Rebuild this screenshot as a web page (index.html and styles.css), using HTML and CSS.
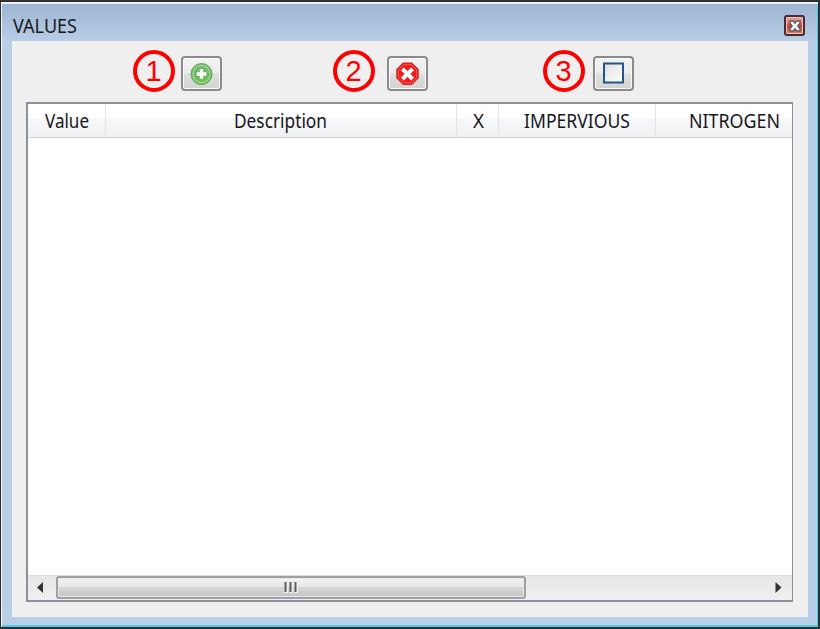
FILE: index.html
```html
<!DOCTYPE html>
<html lang="en">
<head>
<meta charset="utf-8">
<title>VALUES</title>
<link rel="stylesheet" href="styles.css">
</head>
<body>
<div class="window">
  <header class="titlebar">
    <svg class="label" width="70" height="26"><text x="0" y="20" textLength="64" lengthAdjust="spacingAndGlyphs">VALUES</text></svg>
    <button class="close" aria-label="Close">
      <svg width="16" height="16" viewBox="0 0 16 16"><path d="M3 3.2h3.6L8 5.3l1.4-2.1H13v2L10.7 8l2.3 2.8v2H9.4L8 10.7l-1.4 2.1H3v-2L5.3 8 3 5.2z" fill="#fff" stroke="#51505c" stroke-width="1.2"/></svg>
    </button>
  </header>
  <main class="panel">
    <div class="toolbar">
      <div class="tool"><span class="number">1</span>
        <button aria-label="Add"><svg width="24" height="24" viewBox="0 0 24 24"><defs><linearGradient id="green" x2="0" y2="1"><stop stop-color="#75b478"/><stop offset="1" stop-color="#65c04c"/></linearGradient></defs><circle cx="11.5" cy="12" r="10.5" fill="url(#green)" stroke="#5ca555"/><circle cx="11.5" cy="12" r="8.6" fill="none" stroke="#a9d8a0" stroke-width="1.2"/><path d="M11.5 7.2v9.6M6.7 12h9.6" stroke="#fff" stroke-width="3.4"/></svg></button></div>
      <div class="tool"><span class="number">2</span>
        <button aria-label="Delete"><svg width="24" height="24" viewBox="0 0 24 24"><path d="M7 1h9l6.2 6.2v9L16 22.5H7l-6.2-6.3v-9z" fill="#f01c1c" stroke="#d42525"/><path d="M7.5 2.6h8l5.1 5.1v8l-5.1 5.2h-8l-5.1-5.2v-8z" fill="none" stroke="#ff6760" stroke-width=".8"/><path d="M6.4 6.8l10.2 10.2m0-10.2L6.4 17" stroke="#fff" stroke-width="4"/></svg></button></div>
      <div class="tool"><span class="number">3</span>
        <button aria-label="Clear"><svg width="24" height="24" viewBox="0 0 24 24"><defs><linearGradient id="paper" x2="1" y2="1"><stop stop-color="#deded9"/><stop offset="1" stop-color="#fff"/></linearGradient></defs><rect x="2" y="1.5" width="19" height="19" fill="url(#paper)" stroke="#245583" stroke-width="2"/></svg></button></div>
    </div>
    <section class="table">
      <div class="headings">
        <div class="cell"><svg class="label" width="44" height="26"><text x="0" y="20" textLength="44" lengthAdjust="spacingAndGlyphs">Value</text></svg></div>
        <div class="cell"><svg class="label" width="93" height="26"><text x="-1" y="20" textLength="93" lengthAdjust="spacingAndGlyphs">Description</text></svg></div>
        <div class="cell"><svg class="label" width="11" height="26"><text x="1" y="20" textLength="11" lengthAdjust="spacingAndGlyphs">X</text></svg></div>
        <div class="cell"><svg class="label" width="106" height="26"><text x="0" y="20" textLength="106" lengthAdjust="spacingAndGlyphs">IMPERVIOUS</text></svg></div>
        <div class="cell last"><svg class="label" width="91" height="26"><text x="0" y="20" textLength="91" lengthAdjust="spacingAndGlyphs">NITROGEN</text></svg></div>
      </div>
      <div class="rows"></div>
      <div class="scrollbar">
        <svg class="arrow" width="28" height="24"><path d="M9 11.5l6-5.5v11z" fill="#333"/></svg>
        <div class="thumb"><svg width="14" height="13"><path d="M0 1h4v11H0zM5 1h4v11H5zM10 1h4v11h-4z" fill="#eee"/><path d="M1.5 1v10M6.5 1v10M11.5 1v10" stroke="#5b5b5b" stroke-width="2"/></svg></div>
        <svg class="arrow" width="28" height="24"><path d="M11.5 6l6 5.5-6 5.5z" fill="#333"/></svg>
      </div>
    </section>
  </main>
</div>
</body>
</html>
```
FILE: styles.css
```css
* { box-sizing: border-box; }
body { margin: 0; overflow: hidden; font-family: "Noto Sans", sans-serif; }
button { padding: 0; font: inherit; }
svg { display: block; flex: none; }
.window {
  display: flex;
  flex-direction: column;
  width: 820px;
  height: 629px;
  padding: 2px 10px 10px 11px;
  border: 2px solid #302f30;
  border-left-width: 1px;
  background: linear-gradient(#9bb4d0, #b9cee7 40px);
  box-shadow: inset 1px 2px #eef2f6, inset -1px -2px #48cdea;
}
.titlebar {
  display: flex;
  justify-content: space-between;
  flex: 0 0 37px;
  padding: 9px 3px 0 1px;
}
.label { overflow: visible; font-size: 19px; fill: #17171b; }
.close {
  display: flex;
  align-items: center;
  justify-content: center;
  width: 21px;
  height: 21px;
  margin-top: 2px;
  border: 2px solid #512735;
  border-radius: 3px;
  background: linear-gradient(#e8aba0, #c97362 40%, #bd422c 48%, #d98375);
  box-shadow: inset 0 0 0 1px #efc0b9;
}
.panel { flex: 1; padding: 11px 14px 14px; background: #efefef; }
.toolbar { display: flex; gap: 110px; height: 50px; padding-left: 107px; }
.tool { display: flex; gap: 6px; width: 90px; }
.tool:nth-child(2) { gap: 12px; width: 100px; }
.tool:nth-child(3) { gap: 8px; }
.number {
  display: flex;
  align-items: center;
  justify-content: center;
  flex: none;
  width: 42px;
  height: 42px;
  margin-top: -2px;
  padding-right: 1px;
  border: 4px solid #f00;
  border-radius: 50%;
  color: #f00;
  font: 29px/1 "Liberation Sans", sans-serif;
}
.tool button {
  display: flex;
  align-items: center;
  justify-content: center;
  flex: none;
  width: 41px;
  height: 35px;
  margin-top: 4px;
  border: 2px solid #8b8b8b;
  border-radius: 4px;
  background: linear-gradient(#f3f3f3, #ebebeb 49%, #dfdfdf 52%, #d3d3d3);
  box-shadow: inset 0 0 0 1px #fafafa;
}
.table {
  display: flex;
  flex-direction: column;
  width: 767px;
  height: 500px;
  border: 2px solid #8b9099;
  border-right-width: 1px;
  background: #fff;
}
.headings {
  display: grid;
  grid-template-columns: 78px 351px 42px 157px 1fr;
  flex: 0 0 34px;
  border-bottom: 1px solid #d0d1d4;
  background: linear-gradient(#fff 42%, #f7f8fa 43%, #f0f1f3);
}
.cell { display: flex; justify-content: center; padding-top: 4px; border-right: 1px solid #e2e3e5; }
.last { justify-content: flex-end; padding-right: 12px; border: 0; }
.rows { flex: 1; }
.scrollbar {
  display: flex;
  flex: 0 0 25px;
  justify-content: space-between;
  border-top: 1px solid #ddd;
  background: linear-gradient(#e7e7e7, #efefef);
}
.thumb {
  display: flex;
  align-items: center;
  justify-content: center;
  width: 470px;
  height: 23px;
  margin-right: 238px;
  border: 2px solid #a0a0a0;
  border-radius: 3px;
  background: linear-gradient(#f4f4f4, #e8e8e8 45%, #d6d6d7 50%, #c4c4c6);
  box-shadow: inset 0 0 0 1px #e8e8e8;
}
```
